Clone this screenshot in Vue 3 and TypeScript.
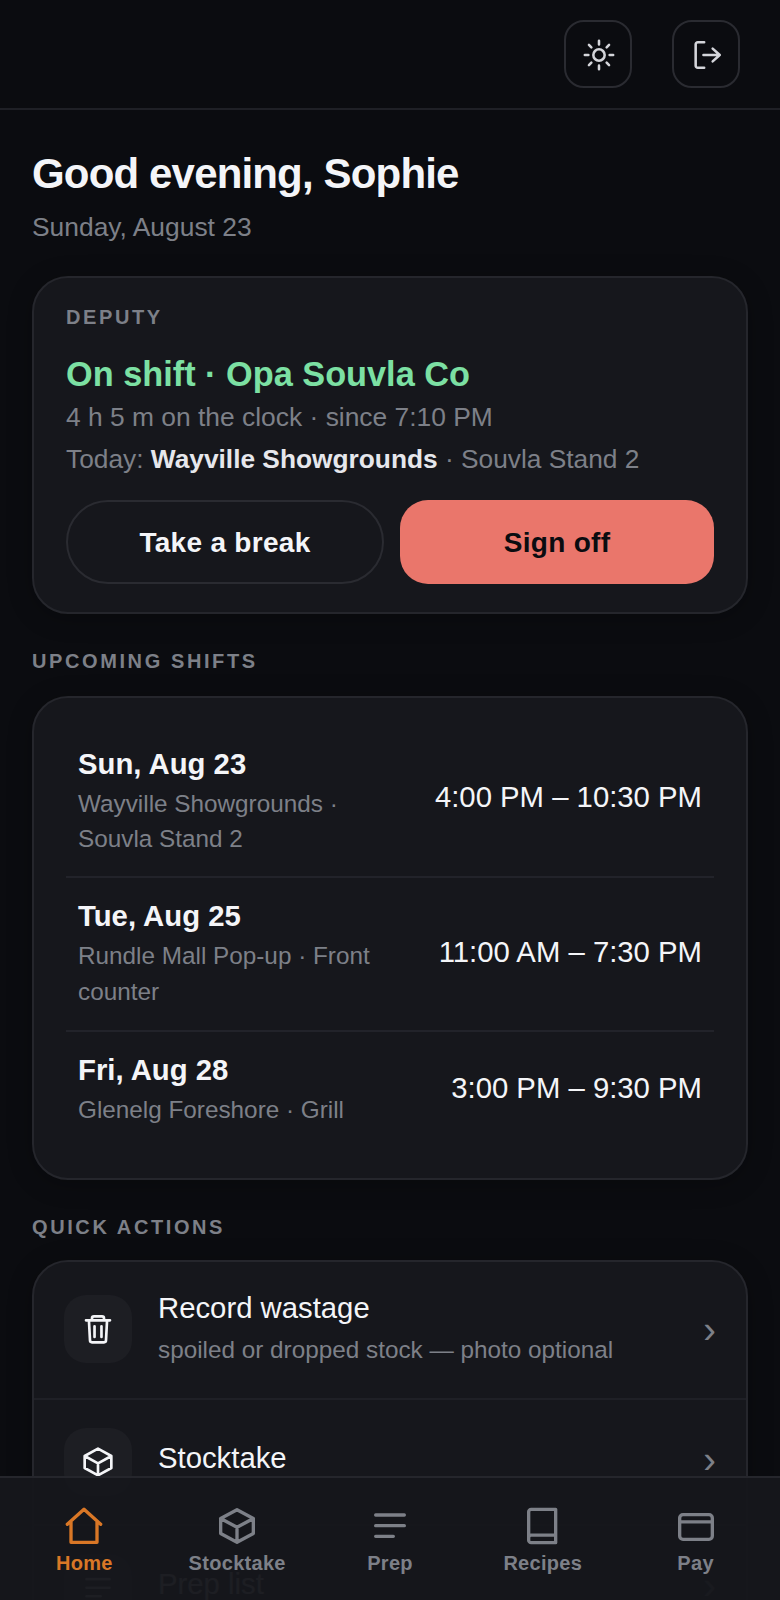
<script setup lang="ts">
interface Shift {
  day: string
  place: string
  time: string
}

const shifts: Shift[] = [
  { day: 'Sun, Aug 23', place: 'Wayville Showgrounds · Souvla Stand 2', time: '4:00 PM – 10:30 PM' },
  { day: 'Tue, Aug 25', place: 'Rundle Mall Pop-up · Front counter', time: '11:00 AM – 7:30 PM' },
  { day: 'Fri, Aug 28', place: 'Glenelg Foreshore · Grill', time: '3:00 PM – 9:30 PM' },
]

const navItems = [
  { label: 'Home', icon: 'home', active: true },
  { label: 'Stocktake', icon: 'box', active: false },
  { label: 'Prep', icon: 'list', active: false },
  { label: 'Recipes', icon: 'book', active: false },
  { label: 'Pay', icon: 'card', active: false },
]
</script>

<template>
  <div class="app">
    <header class="topbar">
      <button class="icon-btn" aria-label="Theme">
        <svg width="34" height="34" viewBox="0 0 24 24" fill="none" stroke="currentColor" stroke-width="1.8" stroke-linecap="round">
          <circle cx="12" cy="12" r="4" />
          <path d="M12 2v2.500M12 19.500V22M4.900 4.900l1.700 1.700M17.400 17.400l1.700 1.700M2 12h2.500M19.500 12H22M4.900 19.100l1.700-1.700M17.400 6.600l1.700-1.700" />
        </svg>
      </button>
      <button class="icon-btn" aria-label="Log out">
        <svg width="34" height="34" viewBox="0 0 24 24" fill="none" stroke="currentColor" stroke-width="1.8" stroke-linecap="round" stroke-linejoin="round">
          <path d="M10 21H5.500A1.500 1.500 0 0 1 4 19.500v-15A1.500 1.500 0 0 1 5.500 3H10" />
          <path d="M9.500 12H21M16 7.500l5 4.500-5 4.500" />
        </svg>
      </button>
    </header>

    <main class="content">
      <h1 class="greeting">Good evening, Sophie</h1>
      <p class="date">Sunday, August 23</p>

      <section class="card deputy">
        <div class="eyebrow">DEPUTY</div>
        <div class="status">On shift · Opa Souvla Co</div>
        <div class="clock">4 h 5 m on the clock · since 7:10 PM</div>
        <div class="today">Today: <strong>Wayville Showgrounds</strong> · Souvla Stand 2</div>
        <div class="actions">
          <button class="btn btn-ghost">Take a break</button>
          <button class="btn btn-danger">Sign off</button>
        </div>
      </section>

      <h2 class="section-title">UPCOMING SHIFTS</h2>
      <section class="card shifts">
        <div v-for="s in shifts" :key="s.day" class="shift">
          <div class="shift-info">
            <div class="shift-day">{{ s.day }}</div>
            <div class="shift-place">{{ s.place }}</div>
          </div>
          <div class="shift-time">{{ s.time }}</div>
        </div>
      </section>

      <h2 class="section-title">QUICK ACTIONS</h2>
      <section class="card quick">
        <div class="quick-row">
          <span class="quick-icon">
            <svg width="32" height="32" viewBox="0 0 24 24" fill="none" stroke="currentColor" stroke-width="2" stroke-linecap="round" stroke-linejoin="round">
              <path d="M3 5.500h18M7.500 5.500V4A1.500 1.500 0 0 1 9 2.500h6A1.500 1.500 0 0 1 16.500 4v1.500M5.200 5.500l.8 15A1.500 1.500 0 0 0 7.500 22h9a1.500 1.500 0 0 0 1.500-1.500l.8-15M9.400 10v8M14.600 10v8" />
            </svg>
          </span>
          <div class="quick-text">
            <div class="quick-title">Record wastage</div>
            <div class="quick-sub">spoiled or dropped stock — photo optional</div>
          </div>
          <span class="chevron">›</span>
        </div>
        <div class="quick-row">
          <span class="quick-icon">
            <svg width="32" height="32" viewBox="0 0 24 24" fill="none" stroke="currentColor" stroke-width="2" stroke-linecap="round" stroke-linejoin="round">
              <path d="M12 2l10 5.500v9L12 22 2 16.500v-9zM2 7.500l10 5.500 10-5.500M12 13v9" />
            </svg>
          </span>
          <div class="quick-text">
            <div class="quick-title">Stocktake</div>
          </div>
          <span class="chevron">›</span>
        </div>
        <div class="quick-row">
          <span class="quick-icon">
            <svg width="32" height="32" viewBox="0 0 24 24" fill="none" stroke="currentColor" stroke-width="2" stroke-linecap="round">
              <path d="M3.400 5.400h17.200M3.400 11.800h17.200M3.400 18.200H14" />
            </svg>
          </span>
          <div class="quick-text">
            <div class="quick-title">Prep list</div>
          </div>
          <span class="chevron">›</span>
        </div>
      </section>
    </main>

    <nav class="tabbar">
      <div v-for="item in navItems" :key="item.label" class="tab" :class="{ active: item.active }">
        <svg width="40" height="40" viewBox="0 0 24 24" fill="none" stroke="currentColor" stroke-width="2" stroke-linecap="round" stroke-linejoin="round">
          <path v-if="item.icon === 'home'" d="M2 11L12 2l10 9M4.200 9v12.800h15.600V9" />
          <path v-else-if="item.icon === 'box'" d="M12 2.200l9.800 5.300v9L12 21.800l-9.800-5.300v-9zM2.200 7.500l9.800 5.300 9.800-5.300M12 12.800v9" />
          <path v-else-if="item.icon === 'list'" d="M3.400 5.400h17.200M3.400 11.800h17.200M3.400 18.200H14" />
          <path v-else-if="item.icon === 'book'" d="M3.400 19V3.500A1.500 1.500 0 0 1 4.900 2h14.700v20H4.900a1.500 1.500 0 0 1-1.500-1.500V19zm0 0a1.500 1.500 0 0 1 1.500-1.500h14.700" />
          <path v-else d="M4.200 5.200h15.600a2 2 0 0 1 2 2V18a2 2 0 0 1-2 2H4.200a2 2 0 0 1-2-2V7.200a2 2 0 0 1 2-2zM2.200 9.500h19.600" />
        </svg>
        <span class="tab-label">{{ item.label }}</span>
      </div>
    </nav>
  </div>
</template>

<style>
html,
body {
  margin: 0;
  background: #0b0c10;
}
</style>

<style scoped>
.app {
  position: relative;
  width: 780px;
  height: 1600px;
  overflow: hidden;
  background: #0b0c10;
  color: #f4f5f8;
  font-family: 'Liberation Sans', Arial, sans-serif;
}

.topbar {
  display: flex;
  justify-content: flex-end;
  gap: 40px;
  box-sizing: border-box;
  height: 110px;
  padding: 20px 40px;
  border-bottom: 2px solid #1f2026;
}

.icon-btn {
  display: flex;
  align-items: center;
  justify-content: center;
  width: 68px;
  height: 68px;
  padding: 1px 0 0 1px;
  border: 2px solid #2a2b31;
  border-radius: 20px;
  background: transparent;
  color: #d4d5da;
}

.content {
  padding: 38px 32px 0;
}

.greeting {
  margin: 0;
  font-size: 42px;
  line-height: 52px;
  font-weight: 700;
  letter-spacing: -0.84px;
  color: #f4f5f8;
}

.date {
  margin: 8px 0 0;
  font-size: 26.4px;
  line-height: 38px;
  color: #7d8088;
}

.card {
  box-sizing: border-box;
  background: #16171c;
  border: 2px solid #25262c;
  border-radius: 36px;
  box-shadow: 0 4px 24px rgba(0, 0, 0, 0.25);
}

.deputy {
  margin-top: 30px;
  padding: 27px 32px 28px;
}

.eyebrow,
.section-title {
  font-size: 20px;
  line-height: 24px;
  font-weight: 700;
  letter-spacing: 2.6px;
  color: #7d8088;
}

.status {
  margin-top: 24px;
  font-size: 34.3px;
  line-height: 42px;
  font-weight: 700;
  color: #7ce0a3;
}

.clock {
  margin-top: 2px;
  font-size: 26.4px;
  line-height: 40px;
  color: #7d8088;
}

.today {
  margin-top: 2px;
  font-size: 26.3px;
  line-height: 40px;
  color: #7d8088;
}

.today strong {
  color: #e6e7ec;
}

.actions {
  display: flex;
  gap: 16px;
  margin-top: 21px;
}

.btn {
  flex: 1;
  height: 84px;
  padding: 2px 0 0;
  font-family: inherit;
  font-size: 28px;
  font-weight: 700;
  letter-spacing: 0.3px;
}

.btn-ghost {
  border: 2px solid #2a2b31;
  border-radius: 42px;
  background: transparent;
  color: #f4f5f8;
}

.btn-danger {
  border: 0;
  border-radius: 28px;
  background: #ea766b;
  color: #0b0c10;
}

.section-title {
  margin: 35px 0 0;
}

.shifts {
  margin-top: 23px;
  padding: 28px 32px 29px;
}

.shift {
  display: flex;
  align-items: center;
  justify-content: space-between;
  gap: 32px;
  padding: 20px 12px 21px;
  border-top: 2px solid #22232a;
}

.shift:first-child {
  padding-bottom: 20px;
  border-top: 0;
}

.shift-info {
  flex: 1;
  min-width: 0;
}

.shift-day {
  font-size: 29.3px;
  line-height: 36px;
  font-weight: 700;
  color: #f4f5f8;
}

.shift-place {
  margin-top: 4px;
  font-size: 24.3px;
  line-height: 35.5px;
  color: #7d8088;
}

.shift:first-child .shift-place {
  line-height: 35px;
}

.shift-time {
  flex: none;
  margin-bottom: 4px;
  font-size: 29.3px;
  line-height: 36px;
  color: #f4f5f8;
}

.shift:first-child .shift-time {
  margin-bottom: 8px;
}

.quick {
  margin-top: 21px;
}

.quick-row {
  display: flex;
  align-items: center;
  gap: 26px;
  padding: 28px 30px 28px 30px;
  border-top: 2px solid #1f2026;
}

.quick-row:first-child {
  padding-bottom: 31px;
  border-top: 0;
}

.quick-row:first-child .quick-icon {
  margin-top: 2px;
}

.quick-icon {
  display: flex;
  flex: none;
  align-items: center;
  justify-content: center;
  width: 68px;
  height: 68px;
  border-radius: 22px;
  background: #1d1e23;
  color: #f4f5f8;
}

.quick-text {
  flex: 1;
  min-width: 0;
}

.quick-title {
  margin-bottom: 7px;
  font-size: 29.3px;
  line-height: 36px;
  color: #f4f5f8;
}

.quick-sub {
  font-size: 24.3px;
  line-height: 34px;
  color: #7d8088;
}

.chevron {
  flex: none;
  margin-bottom: 4px;
  font-size: 38px;
  line-height: 40px;
  color: #7d8088;
}

.quick-row:first-child .chevron {
  margin-top: 4px;
  margin-bottom: 0;
}

.tabbar {
  position: absolute;
  left: 0;
  right: 0;
  bottom: 0;
  display: flex;
  box-sizing: border-box;
  height: 124px;
  padding: 28px 8px 0;
  border-top: 2px solid #25262c;
  background: rgba(22, 23, 28, 0.97);
}

.tab {
  display: flex;
  flex: 1;
  flex-direction: column;
  align-items: center;
  color: #7d8088;
}

.tab.active {
  color: #d97726;
}

.tab-label {
  margin-top: 4px;
  font-size: 20px;
  line-height: 26px;
  font-weight: 700;
  letter-spacing: 0.3px;
}
</style>
